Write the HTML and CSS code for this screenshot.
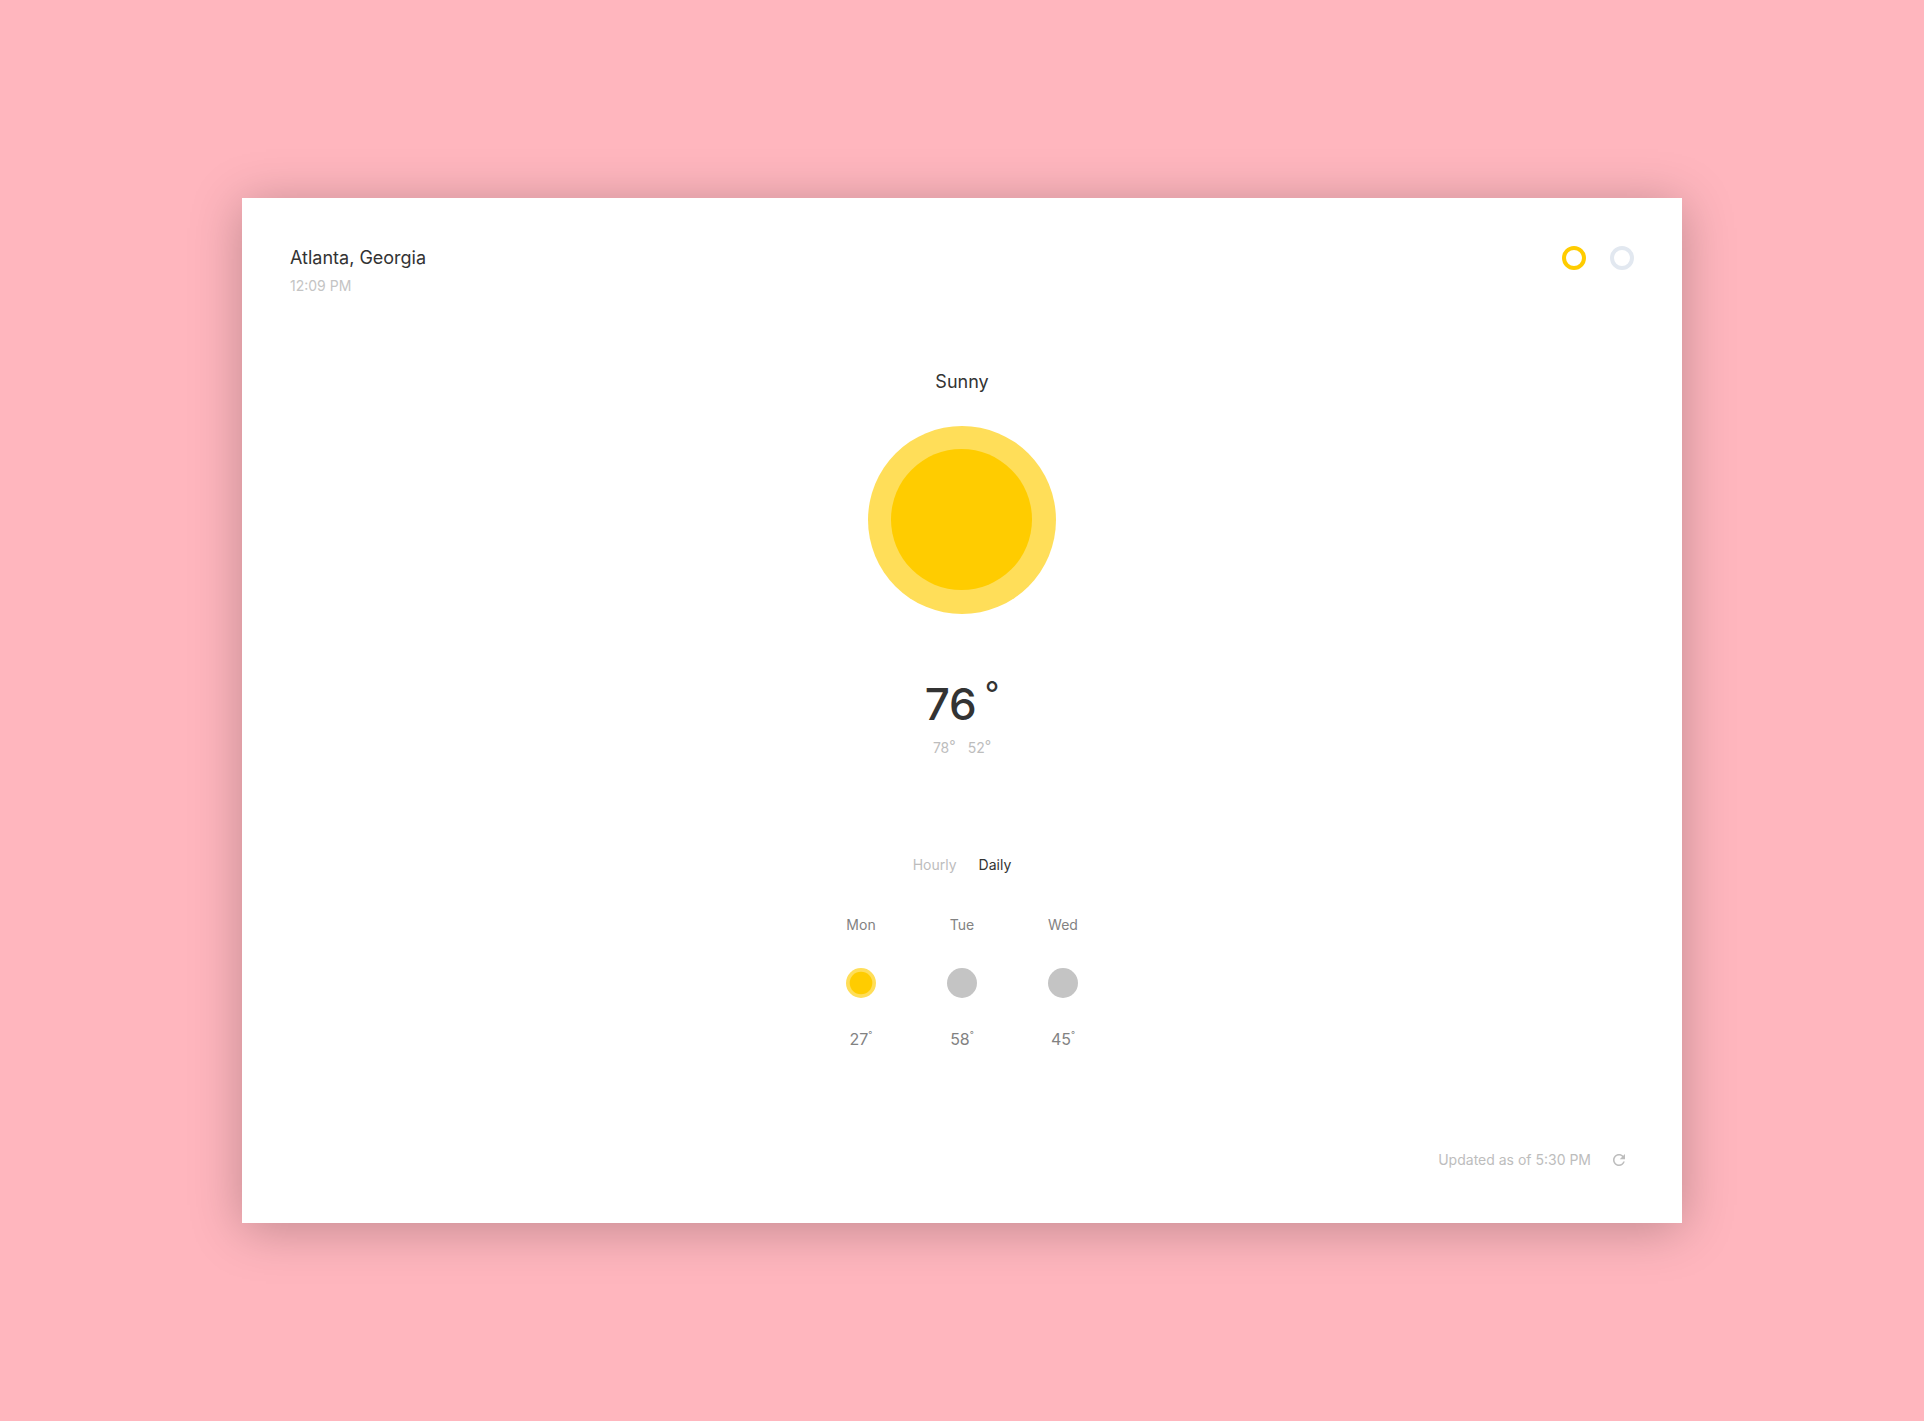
FILE: index.html
```html
<!DOCTYPE html>
<html lang="en">
<head>
<meta charset="utf-8">
<meta name="viewport" content="width=device-width, initial-scale=1">
<title>Weather</title>
<link rel="stylesheet" href="styles.css">
</head>
<body>
<main class="card">
  <header class="header">
    <div>
      <h1 class="city">Atlanta, Georgia</h1>
      <p class="time">12:09 PM</p>
    </div>
    <div class="themes">
      <button class="ring ring-active" type="button" aria-label="Light theme"></button>
      <button class="ring" type="button" aria-label="Dark theme"></button>
    </div>
  </header>

  <section class="current">
    <h2 class="condition">Sunny</h2>
    <svg class="sun" viewBox="0 0 188 188" aria-hidden="true">
      <circle cx="94" cy="94" r="94" fill="#ffde59"/>
      <circle cx="93.5" cy="93.5" r="70.5" fill="#ffcc00"/>
    </svg>
    <p class="temperature">76<span class="degree">°</span></p>
    <p class="range">
      <span class="range-value">78<span class="degree">°</span></span>
      <span class="range-value">52<span class="degree">°</span></span>
    </p>
  </section>

  <nav class="tabs">
    <button class="tab" type="button">Hourly</button>
    <button class="tab tab-active" type="button">Daily</button>
  </nav>

  <ul class="forecast">
    <li class="day">
      <span class="day-name">Mon</span>
      <svg class="day-icon" viewBox="0 0 30 30" aria-hidden="true">
        <circle cx="15" cy="15" r="15" fill="#ffde59"/>
        <circle cx="15" cy="15" r="11.3" fill="#ffcc00"/>
      </svg>
      <span class="day-temp">27<span class="degree">°</span></span>
    </li>
    <li class="day">
      <span class="day-name">Tue</span>
      <svg class="day-icon" viewBox="0 0 30 30" aria-hidden="true"><circle cx="15" cy="15" r="15" fill="#c4c4c4"/></svg>
      <span class="day-temp">58<span class="degree">°</span></span>
    </li>
    <li class="day">
      <span class="day-name">Wed</span>
      <svg class="day-icon" viewBox="0 0 30 30" aria-hidden="true"><circle cx="15" cy="15" r="15" fill="#c4c4c4"/></svg>
      <span class="day-temp">45<span class="degree">°</span></span>
    </li>
  </ul>

  <footer class="footer">
    <span>Updated as of 5:30 PM</span>
    <button class="refresh" type="button" aria-label="Refresh">
      <svg viewBox="0 0 24 24" width="18" height="18" aria-hidden="true"><path fill="currentColor" d="M17.65 6.35C16.2 4.9 14.21 4 12 4c-4.42 0-7.99 3.58-7.99 8s3.57 8 7.99 8c3.73 0 6.84-2.55 7.73-6h-2.08c-.82 2.33-3.04 4-5.65 4-3.31 0-6-2.69-6-6s2.69-6 6-6c1.66 0 3.14.69 4.22 1.78L13 11h7V4l-2.35 2.35z"/></svg>
    </button>
  </footer>
</main>
</body>
</html>
```
FILE: styles.css
```css
* {
  box-sizing: border-box;
  margin: 0;
  padding: 0;
}

body {
  display: flex;
  align-items: center;
  justify-content: center;
  min-height: 100vh;
  padding: 48px;
  background: #ffb6be;
  color: #333;
  font-family: Inter, "Liberation Sans", sans-serif;
  font-size: 14px;
  line-height: 20px;
}

button {
  border: 0;
  background: none;
  color: inherit;
  font: inherit;
  cursor: pointer;
}

.card {
  display: flex;
  flex-direction: column;
  width: 100%;
  max-width: 1440px;
  padding: 48px 48px 53px;
  background: #fff;
  box-shadow: 0 6px 48px rgba(0, 0, 0, 0.25);
}

.header {
  display: flex;
  justify-content: space-between;
  align-items: flex-start;
}

.city,
.condition {
  font-size: 18px;
  font-weight: 400;
  line-height: 24px;
}

.time {
  margin-top: 6px;
  color: #c4c4c4;
}

.themes {
  display: flex;
  gap: 24px;
}

.ring {
  width: 24px;
  height: 24px;
  border: 4px solid #e2e8f0;
  border-radius: 50%;
}

.ring-active {
  border-color: #ffcc00;
}

.current {
  display: flex;
  flex-direction: column;
  align-items: center;
  margin-top: 74px;
}

.sun {
  width: 188px;
  height: 188px;
  margin-top: 32px;
}

.temperature {
  display: flex;
  gap: 8px;
  margin-top: 64px;
  font-size: 44px;
  font-weight: 500;
  line-height: 52px;
}

.temperature .degree {
  font-size: 32px;
  font-weight: 400;
  line-height: 32px;
}

.range {
  display: flex;
  gap: 12px;
  margin-top: 8px;
  color: #bdbdbd;
}

.range-value {
  display: flex;
}

.range .degree {
  line-height: 16px;
}

.tabs {
  display: flex;
  justify-content: center;
  gap: 22px;
  margin-top: 97px;
}

.tab {
  color: #bdbdbd;
}

.tab-active {
  color: #333;
}

.forecast {
  display: flex;
  justify-content: center;
  gap: 41px;
  margin-top: 40px;
  color: #828282;
  list-style: none;
}

.day {
  display: flex;
  flex-direction: column;
  align-items: center;
  width: 60px;
}

.day-icon {
  width: 30px;
  height: 30px;
  margin: 33px 0 29px;
}

.day-temp {
  display: flex;
  font-size: 16px;
  line-height: 24px;
}

.day-temp .degree {
  font-size: 9px;
  line-height: 16px;
}

.footer {
  display: flex;
  justify-content: flex-end;
  align-items: center;
  gap: 19px;
  margin-top: 99px;
  padding-right: 6px;
  color: #bdbdbd;
}

.refresh {
  display: flex;
}
```
